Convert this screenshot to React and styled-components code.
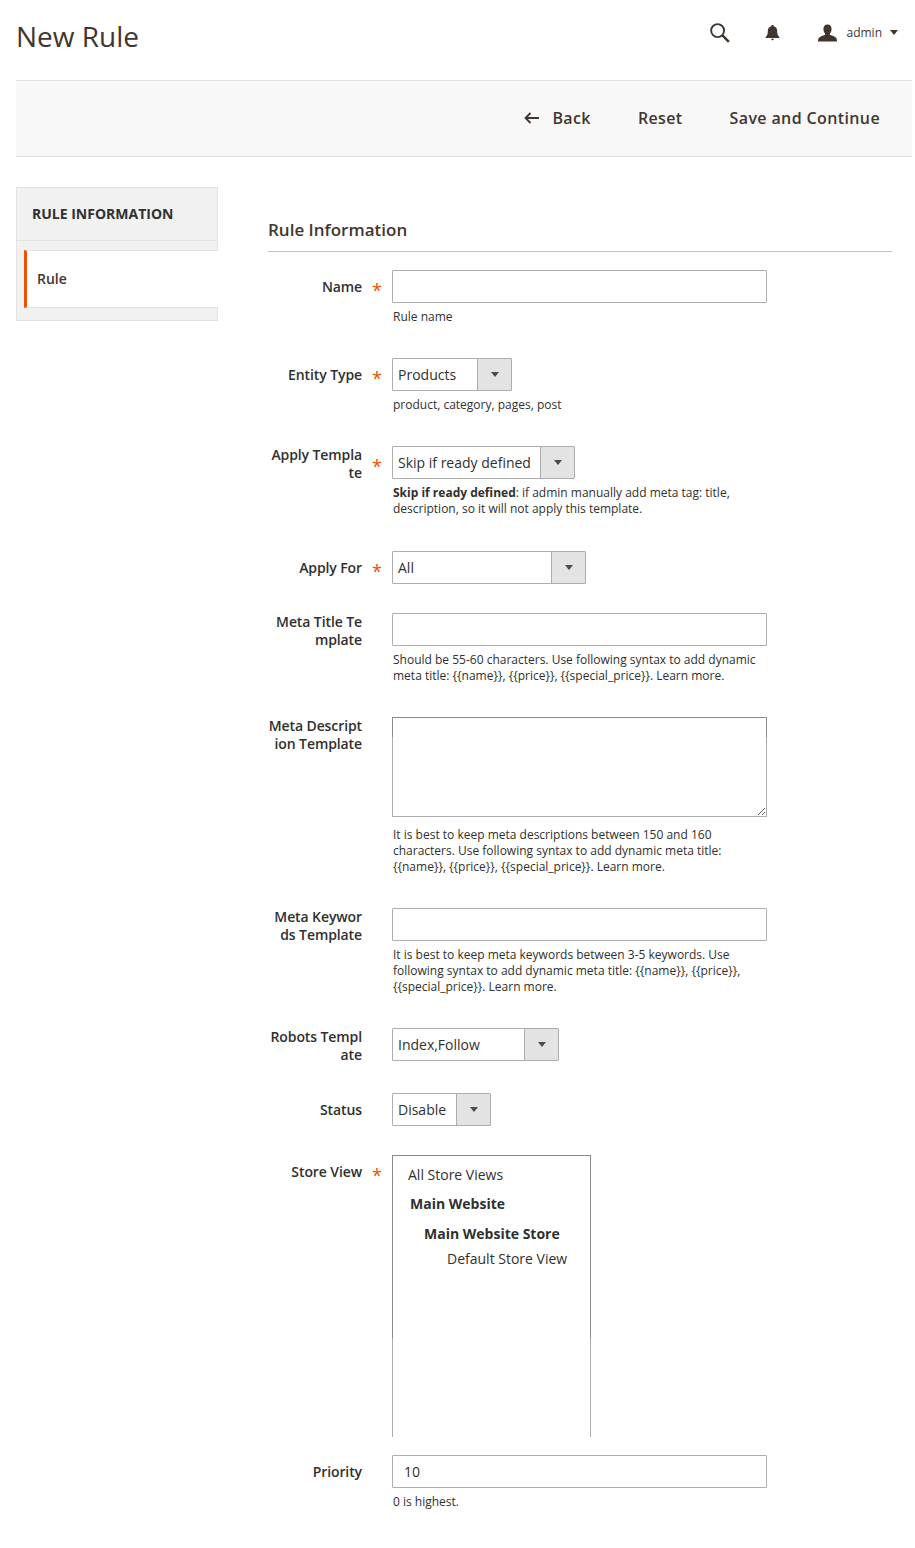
import React from "react";
import styled, { createGlobalStyle } from "styled-components";

const Global = createGlobalStyle`
  html, body { margin: 0; padding: 0; background: #fff; }
  body { font-family: "Open Sans", sans-serif; color: #303030; font-size: 14px; }
  * { box-sizing: border-box; }
`;

const Page = styled.div`
  width: 915px;
  min-height: 1548px;
  padding: 0 3px 0 16px;
  background: #fff;
`;
const TopBar = styled.header`
  display: flex;
  align-items: flex-start;
  justify-content: space-between;
  height: 80px;
  padding: 19px 14px 0 0;
`;
const Title = styled.h1`
  margin: -1px 0 0;
  font-size: 28px;
  font-weight: 400;
  color: #41362f;
  line-height: 36px;
`;
const Actions = styled.div`
  display: flex;
  align-items: center;
  height: 28px;
`;
const IconSlot = styled.span`
  display: flex;
  margin-right: ${(p) => p.$mr}px;
  color: #41362f;
`;
const UserName = styled.span`
  font-size: 12px;
  color: #41362f;
  margin-left: 9px;
  margin-top: -2px;
`;
const Caret = styled.span`
  width: 0;
  height: 0;
  margin: -2px 0 0 8px;
  border-left: 4px solid transparent;
  border-right: 4px solid transparent;
  border-top: 5px solid #41362f;
`;
const Toolbar = styled.div`
  display: flex;
  align-items: center;
  justify-content: flex-end;
  height: 77px;
  padding: 0 32px 2px 0;
  gap: 47px;
  background: #f8f8f8;
  border-top: 1px solid #e3e3e3;
  border-bottom: 1px solid #e3e3e3;
`;
const ToolButton = styled.button`
  display: flex;
  align-items: center;
  gap: 13px;
  padding: 0;
  border: 0;
  background: none;
  font: 600 16px "Open Sans", sans-serif;
  letter-spacing: 0.38px;
  color: #41362f;
`;
const Columns = styled.div`
  display: flex;
  gap: 50px;
  margin-top: 30px;
`;
const Sidebar = styled.aside`
  width: 202px;
  flex: none;
  align-self: flex-start;
  background: #f1f1f1;
  border: 1px solid #e3e3e3;
  padding-bottom: 12px;
`;
const SideHead = styled.div`
  height: 53px;
  padding: 0 0 2px 15px;
  display: flex;
  align-items: center;
  font-size: 14px;
  font-weight: 700;
  color: #303030;
  border-bottom: 1px solid #e3e3e3;
`;
const SideItem = styled.div`
  height: 58px;
  margin: 9px -1px 0 7px;
  padding: 0 0 1px 10px;
  display: flex;
  align-items: center;
  background: #fff;
  border-left: 3px solid #eb5202;
  border-top: 1px solid #e3e3e3;
  border-bottom: 1px solid #e3e3e3;
  font-size: 14px;
  font-weight: 600;
  color: #41362f;
`;
const Main = styled.main`
  width: 624px;
  flex: none;
`;
const SectionTitle = styled.h2`
  margin: 31px 0 18px;
  height: 34px;
  font-size: 17px;
  font-weight: 600;
  line-height: 24px;
  color: #41362f;
  border-bottom: 1px solid #cac3b4;
`;
const Field = styled.div`
  display: grid;
  grid-template-columns: 94px 30px 375px;
  margin-bottom: ${(p) => p.$after ?? 29}px;
`;
const Label = styled.label`
  padding-top: ${(p) => (p.$wrapped ? 0 : 8)}px;
  font-size: 14px;
  font-weight: 600;
  line-height: 18px;
  letter-spacing: -0.1px;
  text-align: right;
  word-break: break-all;
  color: #303030;
`;
const Star = styled.span`
  padding: 9px 0 0 10px;
  font-size: 18px;
  line-height: 22px;
  color: #eb5202;
`;
const Control = styled.div`
  min-width: 0;
`;
const TextInput = styled.input`
  display: block;
  width: 100%;
  height: 33px;
  padding: 0 11px;
  border: 1px solid #adadad;
  border-radius: 1px;
  outline: 0;
  background: #fff;
  font: 14px "Open Sans", sans-serif;
  color: #303030;
`;
const TextArea = styled.textarea`
  display: block;
  width: 100%;
  height: 100px;
  margin-bottom: 10px;
  border: 1px solid;
  border-image: linear-gradient(#8a8a8a 0 20px, #adadad 20px) 1;
  outline: 0;
  background: #fff;
`;
const SelectBox = styled.div`
  display: flex;
  width: ${(p) => p.$width}px;
  height: 33px;
  border: 1px solid #adadad;
  border-radius: 1px;
  background: #fff;
`;
const SelectValue = styled.span`
  flex: 1;
  padding-left: 5px;
  font-size: 14px;
  line-height: 31px;
  color: #303030;
  white-space: nowrap;
`;
const SelectArrow = styled.span`
  flex: none;
  width: 34px;
  display: flex;
  align-items: center;
  justify-content: center;
  background: #e3e3e3;
  border-left: 1px solid #adadad;
  &::after {
    content: "";
    width: 0;
    height: 0;
    border-left: 4px solid transparent;
    border-right: 4px solid transparent;
    border-top: 5px solid #514943;
  }
`;
const Note = styled.div`
  margin: 6px 0 4px 1px;
  font-size: 12px;
  line-height: 16px;
  color: #303030;
  strong { font-weight: 700; }
`;
const StoreList = styled.div`
  width: 199px;
  height: 282px;
  padding-top: 8px;
  border-style: solid;
  border-width: 1px 1px 0;
  border-image: linear-gradient(#8a8a8a 0 182px, #adadad 182px) 1;
`;
const StoreOption = styled.div`
  height: ${(p) => p.$h}px;
  padding-left: ${(p) => p.$indent}px;
  font-size: 14px;
  line-height: 22px;
  font-weight: ${(p) => (p.$bold ? 700 : 400)};
  color: #303030;
  white-space: nowrap;
`;

const Search = () => (
  <svg width="20" height="20" viewBox="0 0 21 21" fill="none" stroke="currentColor">
    <circle cx="8" cy="8" r="6.800" strokeWidth="2" />
    <path d="M12.800 12.800 19.800 19.800" strokeWidth="2.600" />
  </svg>
);
const Bell = () => (
  <svg width="15" height="18" viewBox="0 0 16 18" fill="currentColor">
    <path d="M8 0.500c.8 0 1.300.5 1.400 1.300C12 2.500 13 4.600 13 7.200c0 3 .7 4.800 2.400 6.300v.9H.6v-.9C2.300 12 3 10.200 3 7.200c0-2.600 1-4.700 3.600-5.400C6.700 1 7.200.5 8 .5Z" />
    <path d="M6.500 15.200h3c0 .9-.6 1.600-1.500 1.600s-1.500-.7-1.500-1.600Z" />
  </svg>
);
const User = () => (
  <svg width="19" height="18" viewBox="0 0 20 18" fill="currentColor">
    <path d="M10 0c2.700 0 4.300 1.900 4.300 4.700 0 1.900-.7 3.700-1.800 4.900v1.300c2.500 1 5.300 1.700 6.700 3.300.6.700.8 2.400.8 3.800H0c0-1.400.2-3.100.8-3.800 1.400-1.600 4.200-2.300 6.700-3.300V9.600C6.400 8.400 5.700 6.600 5.700 4.700 5.700 1.900 7.300 0 10 0Z" />
  </svg>
);
const BackArrow = () => (
  <svg width="15" height="12" viewBox="0 0 15 12" fill="none" stroke="currentColor" strokeWidth="1.800">
    <path d="M15 6H1.500M6.500 1 1.500 6l5 5" />
  </svg>
);

const Select = ({ value, width }) => (
  <SelectBox $width={width}>
    <SelectValue>{value}</SelectValue>
    <SelectArrow />
  </SelectBox>
);

const Row = ({ label, required, wrapped, after, children }) => (
  <Field $after={after}>
    <Label $wrapped={wrapped}>{label}</Label>
    <Star>{required ? "*" : ""}</Star>
    <Control>{children}</Control>
  </Field>
);

export default function App() {
  return (
    <Page>
      <Global />
      <TopBar>
        <Title>New Rule</Title>
        <Actions>
          <IconSlot $mr={35}><Search /></IconSlot>
          <IconSlot $mr={38}><Bell /></IconSlot>
          <IconSlot $mr={0}><User /></IconSlot>
          <UserName>admin</UserName>
          <Caret />
        </Actions>
      </TopBar>
      <Toolbar>
        <ToolButton><BackArrow />Back</ToolButton>
        <ToolButton>Reset</ToolButton>
        <ToolButton>Save and Continue</ToolButton>
      </Toolbar>
      <Columns>
        <Sidebar>
          <SideHead>RULE INFORMATION</SideHead>
          <SideItem>Rule</SideItem>
        </Sidebar>
        <Main>
          <SectionTitle>Rule Information</SectionTitle>
          <Row label="Name" required>
            <TextInput />
            <Note>Rule name</Note>
          </Row>
          <Row label="Entity Type" required>
            <Select value="Products" width={120} />
            <Note>product, category, pages, post</Note>
          </Row>
          <Row label="Apply Template" required wrapped after={30}>
            <Select value="Skip if ready defined" width={183} />
            <Note>
              <strong>Skip if ready defined</strong>: if admin manually add meta tag: title, description, so it will not apply this template.
            </Note>
          </Row>
          <Row label="Apply For" required>
            <Select value="All" width={194} />
          </Row>
          <Row label="Meta Title Template" wrapped>
            <TextInput />
            <Note>Should be 55-60 characters. Use following syntax to add dynamic meta title: {"{{name}}, {{price}}, {{special_price}}"}. Learn more.</Note>
          </Row>
          <Row label="Meta Description Template" wrapped>
            <TextArea />
            <Note>It is best to keep meta descriptions between 150 and 160 characters. Use following syntax to add dynamic meta title: {"{{name}}, {{price}}, {{special_price}}"}. Learn more.</Note>
          </Row>
          <Row label="Meta Keywords Template" wrapped>
            <TextInput />
            <Note>It is best to keep meta keywords between 3-5 keywords. Use following syntax to add dynamic meta title: {"{{name}}, {{price}}, {{special_price}}"}. Learn more.</Note>
          </Row>
          <Row label="Robots Template" wrapped>
            <Select value="Index,Follow" width={167} />
          </Row>
          <Row label="Status">
            <Select value="Disable" width={99} />
          </Row>
          <Row label="Store View" required after={18}>
            <StoreList>
              <StoreOption $indent={15} $h={29}>All Store Views</StoreOption>
              <StoreOption $indent={17} $h={30} $bold>Main Website</StoreOption>
              <StoreOption $indent={31} $h={25} $bold>Main Website Store</StoreOption>
              <StoreOption $indent={54} $h={22}>Default Store View</StoreOption>
            </StoreList>
          </Row>
          <Row label="Priority">
            <TextInput defaultValue="10" />
            <Note>0 is highest.</Note>
          </Row>
        </Main>
      </Columns>
    </Page>
  );
}
